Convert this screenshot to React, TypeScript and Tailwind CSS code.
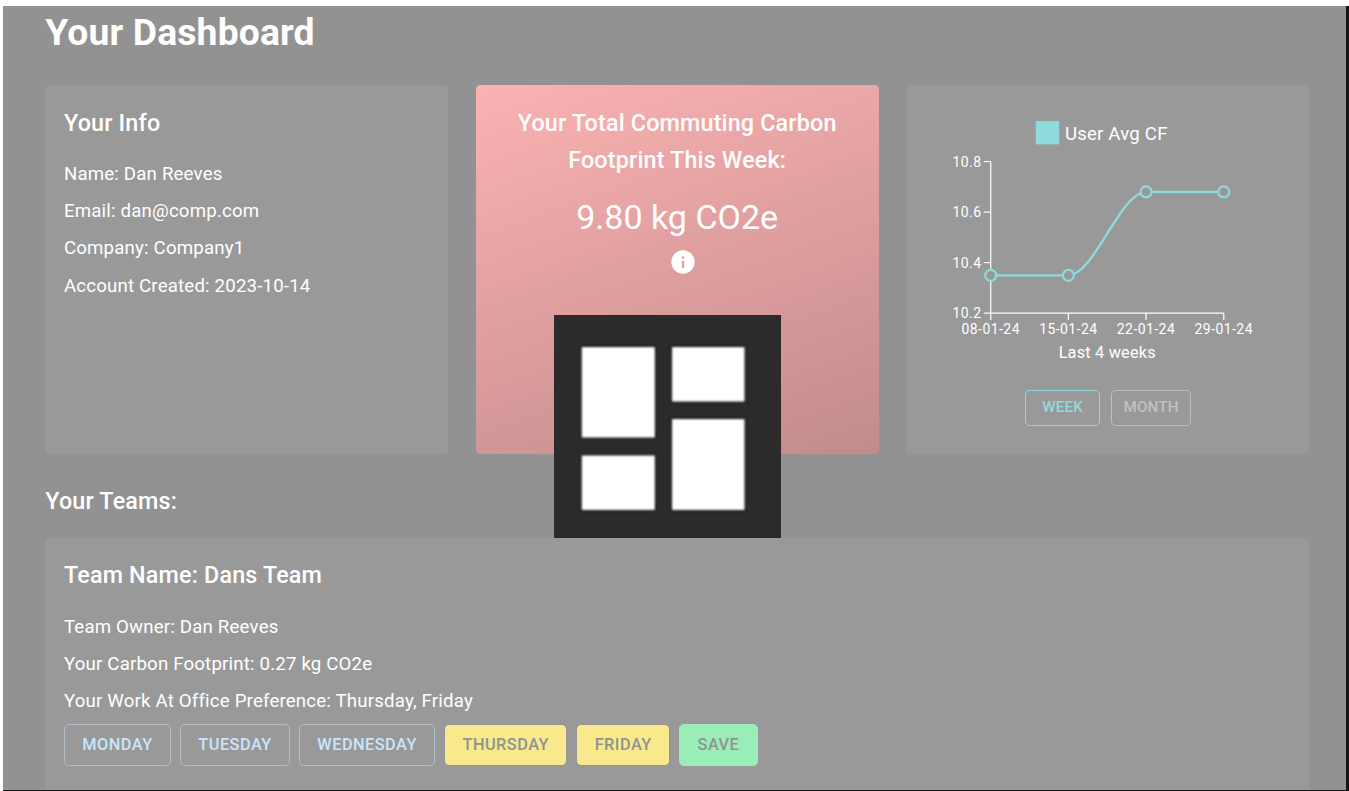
import type { ReactNode } from "react";

const POINTS = [
  { x: 84, y: 190.4, label: "08-01-24" },
  { x: 161.7, y: 190.4, label: "15-01-24" },
  { x: 239.4, y: 106.9, label: "22-01-24" },
  { x: 317.2, y: 106.9, label: "29-01-24" },
];

const Y_TICKS = [
  { y: 76.5, label: "10.8" },
  { y: 127.1, label: "10.6" },
  { y: 177.6, label: "10.4" },
  { y: 228.2, label: "10.2" },
];

function Heading({ children }: { children: ReactNode }) {
  return (
    <h2 className="text-[23.32px] leading-[37.3px] font-medium tracking-[0.175px]">{children}</h2>
  );
}

function Line({ children }: { children: ReactNode }) {
  return <p className="text-[18.66px] leading-7 tracking-[0.175px]">{children}</p>;
}

function TrendChart() {
  return (
    <svg className="block h-[290px] w-full" viewBox="-0.8 0 403 290" fill="none">
      <rect x="129" y="36" width="23.5" height="23.3" fill="#8edbdb" />
      <text x="158.2" y="54.7" fill="#fff" fontSize="18.66" letterSpacing="0.2">User Avg CF</text>
      <g stroke="#fff" strokeWidth="1.2">
        <path d="M84 76.5V228.2H317.2" />
        {Y_TICKS.map((t) => (
          <path key={t.label} d={`M77 ${t.y}H84`} />
        ))}
        {POINTS.map((p) => (
          <path key={p.label} d={`M${p.x} 228.2V235`} />
        ))}
      </g>
      <g fill="#fff" fontSize="14" letterSpacing="0.45">
        {Y_TICKS.map((t) => (
          <text key={t.label} x="74.7" y={t.y + 5} textAnchor="end">{t.label}</text>
        ))}
        {POINTS.map((p) => (
          <text key={p.label} x={p.x} y="248.9" textAnchor="middle">{p.label}</text>
        ))}
      </g>
      <text x="200.6" y="273.2" fill="#fff" fontSize="16.33" letterSpacing="0.2" textAnchor="middle">
        Last 4 weeks
      </text>
      <path
        d="M84 190.4H161.7C187.6 190.4 213.5 106.9 239.4 106.9H317.2"
        stroke="#8edbdb"
        strokeWidth="2.33"
      />
      {POINTS.map((p) => (
        <circle key={p.label} cx={p.x} cy={p.y} r="5.5" fill="#999" stroke="#8edbdb" strokeWidth="2.2" />
      ))}
    </svg>
  );
}

function DashboardTile() {
  return (
    <div className="absolute left-[554px] top-[315px] h-[223px] w-[227px] bg-[#2b2b2b]">
      <svg className="block h-full w-full blur-[0.9px]" viewBox="0 0 227 223" fill="#fff" stroke="#1c1c1c" strokeWidth="1.5">
        <rect x="27" y="31.3" width="74.6" height="92" />
        <rect x="27" y="139.7" width="74.6" height="56" />
        <rect x="117.3" y="31.3" width="74" height="56" />
        <rect x="117.3" y="103.3" width="74" height="92.4" />
      </svg>
    </div>
  );
}

const dayButton =
  "flex h-[42px] shrink-0 items-center justify-center rounded-[4.67px] border text-[16.33px] font-medium tracking-[0.467px]";

export default function App() {
  return (
    <div className="relative h-[791px] w-[1349px] overflow-hidden bg-white pl-[3px] pt-[6px] font-['Roboto',sans-serif] text-white">
      <main className="h-[785px] overflow-hidden border-r-[3px] border-b border-[#161616] bg-[#929292] pl-[42.3px] pr-[37px]">
        <h1 className="h-[79.3px] pt-[4px] text-[37.32px] leading-[44px] font-bold tracking-[0.14px]">Your Dashboard</h1>

        <div className="grid h-[368.7px] grid-cols-3 gap-[27.8px]">
          <section className="rounded-[4.67px] bg-[#999] px-[18.66px] pt-[19.3px]">
            <Heading>Your Info</Heading>
            <div className="mt-[17.7px] flex flex-col gap-[9.33px]">
              <Line>Name: Dan Reeves</Line>
              <Line>Email: dan@comp.com</Line>
              <Line>Company: Company1</Line>
              <Line>Account Created: 2023-10-14</Line>
            </div>
          </section>

          <section className="flex flex-col items-center rounded-[4.67px] bg-[linear-gradient(160deg,#fbb2b2_0%,#c28b8b_100%)] px-[18.66px] pt-[19.3px] text-center">
            <Heading>
              Your Total Commuting Carbon
              <br />
              Footprint This Week:
            </Heading>
            <p className="mt-[16px] text-[34px] leading-[44px]">9.80 kg CO2e</p>
            <svg className="ml-[12px] mt-[8.7px] size-7" viewBox="0 0 24 24" fill="#fff">
              <path d="M12 2C6.48 2 2 6.48 2 12s4.48 10 10 10 10-4.48 10-10S17.52 2 12 2zm1 15h-2v-6h2v6zm0-8h-2V7h2v2z" />
            </svg>
          </section>

          <section className="rounded-[4.67px] bg-[#999]">
            <TrendChart />
            <div className="mt-[15px] flex justify-center gap-[11px] pl-[1px] text-[15.16px] font-medium tracking-[0.2px]">
              <button className="h-9 w-[75px] rounded-[4.67px] border border-[#8edbdb] pb-[2px] text-[#8edbdb]">WEEK</button>
              <button className="h-9 w-20 rounded-[4.67px] border border-[#bfbfbf] pb-[2px] text-[#c1c1c1]">MONTH</button>
            </div>
          </section>
        </div>

        <div className="pt-[28.6px]">
          <Heading>Your Teams:</Heading>
        </div>

        <section className="mt-[18px] h-[300px] rounded-[4.67px] bg-[#999] p-[18.66px]">
          <Heading>Team Name: Dans Team</Heading>
          <div className="mt-[18.7px] flex flex-col gap-[9.33px]">
            <Line>Team Owner: Dan Reeves</Line>
            <Line>Your Carbon Footprint: 0.27 kg CO2e</Line>
            <Line>Your Work At Office Preference: Thursday, Friday</Line>
          </div>
          <div className="mt-[8.7px] flex gap-[9.1px]">
            <button className={`${dayButton} w-[107px] border-[#b0bcc6] text-[#c9e5fc]`}>MONDAY</button>
            <button className={`${dayButton} w-[110px] border-[#b0bcc6] text-[#c9e5fc]`}>TUESDAY</button>
            <button className={`${dayButton} w-[136px] border-[#b0bcc6] text-[#c9e5fc]`}>WEDNESDAY</button>
            <button className={`${dayButton} w-[123px] border-[#949494] bg-[#f8ea8c] bg-clip-padding text-[#929292]`}>THURSDAY</button>
            <button className={`${dayButton} w-[93.7px] border-[#949494] bg-[#f8ea8c] bg-clip-padding text-[#929292]`}>FRIDAY</button>
            <button className={`${dayButton} w-[78.6px] border-[#a4e8bb] bg-[#99edb7] text-[#929292]`}>SAVE</button>
          </div>
        </section>
      </main>
      <DashboardTile />
    </div>
  );
}
